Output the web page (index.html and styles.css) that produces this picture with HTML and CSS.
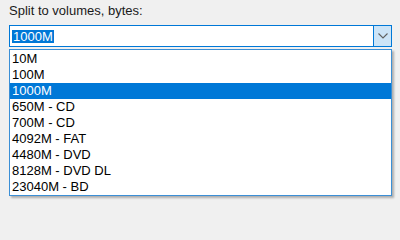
FILE: index.html
```html
<!DOCTYPE html>
<html>
<head>
<meta charset="utf-8">
<link rel="stylesheet" href="styles.css">
</head>
<body>
<div class="panel">
  <div class="label">Split to volumes, bytes:</div>
  <div class="combo">
    <div class="field"><span class="sel">1000M</span></div>
    <div class="btn">
      <svg width="10" height="6" viewBox="0 0 10 6"><path d="M0.5 0.5 L5 5 L9.5 0.5" fill="none" stroke="#606060" stroke-width="1.1"/></svg>
    </div>
  </div>
  <ul class="list">
    <li>10M</li>
    <li>100M</li>
    <li class="active">1000M</li>
    <li>650M - CD</li>
    <li>700M - CD</li>
    <li>4092M - FAT</li>
    <li>4480M - DVD</li>
    <li>8128M - DVD DL</li>
    <li>23040M - BD</li>
  </ul>
</div>
</body>
</html>
```
FILE: styles.css
```css
html, body {
  margin: 0;
  padding: 0;
  background: #f0f0f0;
}
.panel {
  width: 400px;
  height: 203px;
  padding: 3px 8px 0 9px;
  box-sizing: border-box;
  font-family: "Liberation Sans", Arial, sans-serif;
  font-size: 13px;
  color: #000;
}
.label {
  height: 16px;
  line-height: 16px;
  margin-bottom: 6px;
  color: #1a1a1a;
}
.combo {
  display: flex;
  height: 22px;
  width: 383px;
  box-sizing: border-box;
  border: 1px solid #0078d7;
  background: #fff;
}
.field {
  flex: 1;
  display: flex;
  align-items: center;
  padding-left: 2px;
}
.sel {
  background: #0078d7;
  color: #fff;
  line-height: 13px;
  height: 13px;
  padding: 0 1px;
}
.btn {
  width: 17px;
  background: #cce4f7;
  border-left: 1px solid #0078d7;
  display: flex;
  align-items: center;
  justify-content: center;
}
.list {
  list-style: none;
  margin: 2px 0 0 0;
  padding: 1px 0 0 0;
  width: 383px;
  box-sizing: border-box;
  border: 1px solid #3b8fd6;
  background: #fff;
  box-shadow: 2px 2px 2px rgba(0, 0, 0, 0.28);
}
.list li {
  height: 16px;
  line-height: 16px;
  padding-left: 2px;
}
.list li.active {
  background: #0078d7;
  color: #fff;
}
```
